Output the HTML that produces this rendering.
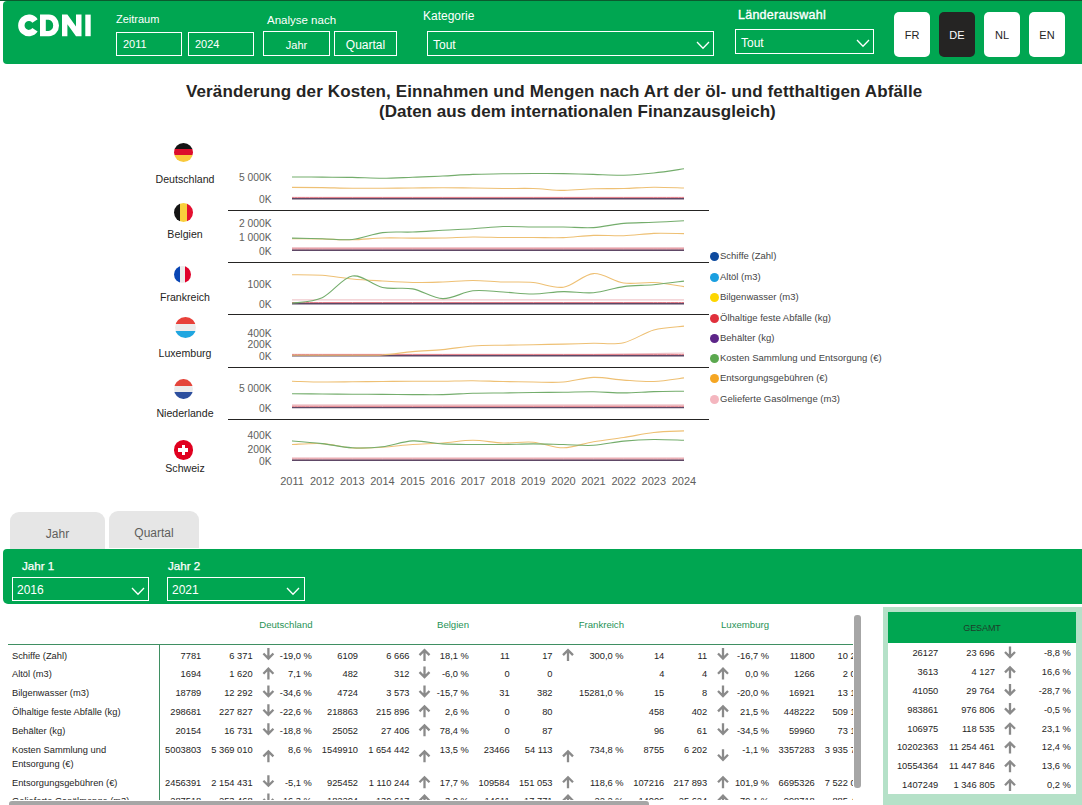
<!DOCTYPE html>
<html><head><meta charset="utf-8"><style>
*{margin:0;padding:0;box-sizing:border-box}
html,body{width:1082px;height:805px;overflow:hidden;background:#fff;font-family:"Liberation Sans",sans-serif;color:#252423}
.abs{position:absolute}
#topline{left:0;top:0;width:1082px;height:1px;background:#0b5a2e}
#hdr{left:3px;top:1px;width:1090px;height:63px;background:#00a651;border-radius:4px}
.lbl{position:absolute;color:#fff;font-size:12px;white-space:nowrap}
.box{position:absolute;border:1px solid #fff;color:#fff;font-size:12px;white-space:nowrap}
.btn{position:absolute;background:#fff;border-radius:5px;font-size:11px;color:#252423;text-align:center}
.chev{position:absolute;width:14px;height:9px}
.title{position:absolute;font-weight:bold;font-size:17px;color:#252423;letter-spacing:0.12px;line-height:20px;white-space:nowrap}
.flag{position:absolute;width:19px;height:19px;border-radius:50%;overflow:hidden}
.cname{position:absolute;font-size:10.6px;color:#252423;text-align:center;width:100px;white-space:nowrap;line-height:13px}
.ax{position:absolute;font-size:10.3px;color:#605e5c;text-align:right;width:60px;white-space:nowrap;line-height:13px}
.yr{position:absolute;font-size:11px;color:#605e5c;text-align:center;width:40px;line-height:13px}
.sep{position:absolute;left:228px;width:481px;height:1px;background:#252423}
.leg{position:absolute;left:709px;font-size:9.5px;color:#444;white-space:nowrap;line-height:11px}
.leg i{position:absolute;left:0.6px;top:1px;width:9px;height:9px;border-radius:50%}
.leg span{position:absolute;left:11px;top:-0.8px}
.tab{position:absolute;background:#e6e6e6;border-radius:9px 9px 0 0;font-size:12px;color:#605e5c;text-align:center}
.t{position:absolute;font-size:9.3px;color:#252423;white-space:nowrap;line-height:12px}
.r{text-align:right}
.ch{position:absolute;font-size:9.6px;color:#1f9356;white-space:nowrap;line-height:12px;text-align:right}
</style></head><body>
<div class="abs" id="topline"></div><div class="abs" id="hdr"></div>
<svg class="abs" style="left:0;top:0" width="100" height="50"><g fill="#fff"><path d="M35.0 21.0 A7.5 7.7 0 1 0 35.0 29.8" stroke="#fff" stroke-width="6.4" fill="none"/><path fill-rule="evenodd" d="M40 14.6 H49 A10 10.8 0 0 1 49 36.2 H40 Z M45.8 19.8 H48.5 A4.7 5.6 0 0 1 48.5 31 H45.8 Z"/><path d="M62 36.2 V14.6 H67.4 L76 26.5 V14.6 H81.5 V36.2 H76 L67.4 24.3 V36.2 Z"/><rect x="85.3" y="14.6" width="5.4" height="21.6"/></g></svg>
<div class="lbl" style="left:116px;top:13px;font-size:11px">Zeitraum</div>
<div class="box" style="left:116px;top:32px;width:66px;height:24px;padding:5px 0 0 6px;font-size:11px">2011</div>
<div class="box" style="left:188px;top:32px;width:66px;height:24px;padding:5px 0 0 6px;font-size:11px">2024</div>
<div class="lbl" style="left:267px;top:14px;font-size:11.5px">Analyse nach</div>
<div class="box" style="left:263px;top:31px;width:67px;height:25px;padding:7px 0 0 0;text-align:center;font-size:11px">Jahr</div>
<div class="box" style="left:334px;top:31px;width:63px;height:25px;padding:6px 0 0 0;text-align:center">Quartal</div>
<div class="lbl" style="left:423px;top:9px">Kategorie</div>
<div class="box" style="left:427px;top:31px;width:287px;height:25px;padding:6px 0 0 5px">Tout</div>
<svg class="chev" style="left:695.5px;top:41px" viewBox="0 0 14 9"><path d="M1 1 L7 7.3 L13 1" stroke="#fff" stroke-width="1.3" fill="none"/></svg>
<div class="lbl" style="left:738px;top:8px;font-size:12.5px;letter-spacing:0.25px;-webkit-text-stroke:0.35px #fff">Länderauswahl</div>
<div class="box" style="left:735px;top:29px;width:139px;height:25px;padding:6px 0 0 5px">Tout</div>
<svg class="chev" style="left:855.5px;top:39px" viewBox="0 0 14 9"><path d="M1 1 L7 7.3 L13 1" stroke="#fff" stroke-width="1.3" fill="none"/></svg>
<div class="btn" style="left:894px;top:12px;width:36px;height:45px;line-height:47px">FR</div>
<div class="btn" style="left:939px;top:12px;width:36px;height:45px;line-height:47px;background:#252423;color:#fff">DE</div>
<div class="btn" style="left:984px;top:12px;width:36px;height:45px;line-height:47px">NL</div>
<div class="btn" style="left:1029px;top:12px;width:36px;height:45px;line-height:47px">EN</div>
<div class="title" style="left:186px;top:81.5px">Veränderung der Kosten, Einnahmen und Mengen nach Art der öl- und fetthaltigen Abfälle</div>
<div class="title" style="left:379px;top:101.5px;letter-spacing:0.02px">(Daten aus dem internationalen Finanzausgleich)</div>

<div class="flag" style="left:174.0px;top:142.8px"><div style="height:33.34%;background:#141414"></div><div style="height:33.34%;background:#dc0e2c"></div><div style="height:33.34%;background:#f9c93c"></div></div>
<div class="flag" style="left:174.0px;top:203.1px;display:flex"><div style="flex:1;background:#141414"></div><div style="flex:1;background:#f9cf3c"></div><div style="flex:1;background:#e4102f"></div></div>
<div class="flag" style="left:173.7px;top:265.8px;width:17.7px;height:17.5px;display:flex"><div style="flex:1;background:#0a46b4"></div><div style="flex:1;background:#ececec"></div><div style="flex:1;background:#e0002a"></div></div>
<div class="flag" style="left:175.4px;top:317px;width:21px;height:21px"><div style="height:34%;background:#e8413a"></div><div style="height:32%;background:#ececec"></div><div style="height:34%;background:#20a6e0"></div></div>
<div class="flag" style="left:174.2px;top:379px;width:18.5px;height:20px"><div style="height:34%;background:#e4453b"></div><div style="height:32%;background:#ececec"></div><div style="height:34%;background:#2d4f9e"></div></div>
<div class="flag" style="left:174.1px;top:440px;width:18.8px;height:19.6px;background:#e0001f"><div style="position:absolute;left:7.5px;top:5px;width:3.7px;height:10px;background:#fff"></div><div style="position:absolute;left:4.3px;top:8.2px;width:10.1px;height:3.8px;background:#fff"></div></div>
<div class="cname" style="left:135px;top:172.5px">Deutschland</div>
<div class="cname" style="left:135px;top:227.5px">Belgien</div>
<div class="cname" style="left:135px;top:290.7px">Frankreich</div>
<div class="cname" style="left:135px;top:346.5px">Luxemburg</div>
<div class="cname" style="left:135px;top:406.6px">Niederlande</div>
<div class="cname" style="left:135px;top:462.4px">Schweiz</div>
<div class="ax" style="left:211.6px;top:171.2px">5 000K</div>
<div class="ax" style="left:211.6px;top:193.3px">0K</div>
<div class="ax" style="left:211.6px;top:217.2px">2 000K</div>
<div class="ax" style="left:211.6px;top:230.5px">1 000K</div>
<div class="ax" style="left:211.6px;top:244.5px">0K</div>
<div class="ax" style="left:211.6px;top:278.4px">100K</div>
<div class="ax" style="left:211.6px;top:297.5px">0K</div>
<div class="ax" style="left:211.6px;top:327.1px">400K</div>
<div class="ax" style="left:211.6px;top:338.2px">200K</div>
<div class="ax" style="left:211.6px;top:349.8px">0K</div>
<div class="ax" style="left:211.6px;top:382.0px">5 000K</div>
<div class="ax" style="left:211.6px;top:401.9px">0K</div>
<div class="ax" style="left:211.6px;top:428.8px">400K</div>
<div class="ax" style="left:211.6px;top:442.5px">200K</div>
<div class="ax" style="left:211.6px;top:454.6px">0K</div>
<div class="sep" style="top:210px"></div>
<div class="sep" style="top:262px"></div>
<div class="sep" style="top:314px"></div>
<div class="sep" style="top:367px"></div>
<div class="sep" style="top:419px"></div>
<div class="yr" style="left:272.0px;top:474.5px">2011</div>
<div class="yr" style="left:302.2px;top:474.5px">2012</div>
<div class="yr" style="left:332.3px;top:474.5px">2013</div>
<div class="yr" style="left:362.5px;top:474.5px">2014</div>
<div class="yr" style="left:392.6px;top:474.5px">2015</div>
<div class="yr" style="left:422.8px;top:474.5px">2016</div>
<div class="yr" style="left:452.9px;top:474.5px">2017</div>
<div class="yr" style="left:483.1px;top:474.5px">2018</div>
<div class="yr" style="left:513.2px;top:474.5px">2019</div>
<div class="yr" style="left:543.4px;top:474.5px">2020</div>
<div class="yr" style="left:573.5px;top:474.5px">2021</div>
<div class="yr" style="left:603.7px;top:474.5px">2022</div>
<div class="yr" style="left:633.8px;top:474.5px">2023</div>
<div class="yr" style="left:664.0px;top:474.5px">2024</div>
<svg class="abs" style="left:0;top:0" width="1082" height="805"><path d="M292.0 198.2 C297.0 198.2 312.1 198.2 322.2 198.2 C332.2 198.2 342.3 198.2 352.3 198.2 C362.4 198.2 372.4 198.2 382.5 198.2 C392.5 198.2 402.6 198.2 412.6 198.2 C422.7 198.2 432.7 198.2 442.8 198.2 C452.8 198.2 462.9 198.2 472.9 198.2 C483.0 198.2 493.0 198.2 503.1 198.2 C513.1 198.2 523.2 198.2 533.2 198.2 C543.3 198.2 553.3 198.2 563.4 198.2 C573.4 198.2 583.5 198.2 593.5 198.2 C603.6 198.2 613.6 198.2 623.7 198.2 C633.7 198.2 643.8 198.2 653.8 198.2 C663.9 198.2 679.0 198.2 684.0 198.2" stroke="#f0c8cd" stroke-width="1.2" fill="none"/>
<path d="M292.0 197.4 C297.0 197.4 312.1 197.4 322.2 197.4 C332.2 197.4 342.3 197.4 352.3 197.4 C362.4 197.4 372.4 197.4 382.5 197.4 C392.5 197.4 402.6 197.4 412.6 197.4 C422.7 197.4 432.7 197.4 442.8 197.4 C452.8 197.4 462.9 197.4 472.9 197.4 C483.0 197.4 493.0 197.4 503.1 197.4 C513.1 197.4 523.2 197.4 533.2 197.4 C543.3 197.4 553.3 197.4 563.4 197.4 C573.4 197.4 583.5 197.4 593.5 197.4 C603.6 197.4 613.6 197.4 623.7 197.4 C633.7 197.4 643.8 197.4 653.8 197.4 C663.9 197.4 679.0 197.4 684.0 197.4" stroke="#e07a84" stroke-width="1.0" fill="none"/>
<path d="M292.0 198.7 C297.0 198.7 312.1 198.7 322.2 198.7 C332.2 198.7 342.3 198.7 352.3 198.7 C362.4 198.7 372.4 198.7 382.5 198.7 C392.5 198.7 402.6 198.7 412.6 198.7 C422.7 198.7 432.7 198.7 442.8 198.7 C452.8 198.7 462.9 198.7 472.9 198.7 C483.0 198.7 493.0 198.7 503.1 198.7 C513.1 198.7 523.2 198.7 533.2 198.7 C543.3 198.7 553.3 198.7 563.4 198.7 C573.4 198.7 583.5 198.7 593.5 198.7 C603.6 198.7 613.6 198.7 623.7 198.7 C633.7 198.7 643.8 198.7 653.8 198.7 C663.9 198.7 679.0 198.7 684.0 198.7" stroke="#5e4866" stroke-width="1.4" fill="none"/>
<path d="M292.0 187.4 C297.0 187.4 312.1 187.4 322.2 187.6 C332.2 187.8 342.3 188.2 352.3 188.3 C362.4 188.4 372.4 188.2 382.5 188.2 C392.5 188.1 402.6 188.1 412.6 188.0 C422.7 187.9 432.7 187.7 442.8 187.7 C452.8 187.7 462.9 187.9 472.9 188.0 C483.0 188.1 493.0 188.4 503.1 188.5 C513.1 188.6 523.2 188.2 533.2 188.5 C543.3 188.8 553.3 190.3 563.4 190.4 C573.4 190.5 583.5 189.1 593.5 188.8 C603.6 188.5 613.6 188.8 623.7 188.5 C633.7 188.2 643.8 187.3 653.8 187.2 C663.9 187.1 679.0 187.9 684.0 188.0" stroke="#eec074" stroke-width="1.1" fill="none"/>
<path d="M292.0 177.0 C297.0 177.0 312.1 177.0 322.2 177.1 C332.2 177.2 342.3 177.2 352.3 177.4 C362.4 177.6 372.4 178.3 382.5 178.3 C392.5 178.3 402.6 177.6 412.6 177.2 C422.7 176.8 432.7 176.5 442.8 176.0 C452.8 175.5 462.9 174.8 472.9 174.4 C483.0 174.0 493.0 174.0 503.1 173.8 C513.1 173.7 523.2 173.5 533.2 173.5 C543.3 173.5 553.3 173.4 563.4 173.6 C573.4 173.8 583.5 174.1 593.5 174.4 C603.6 174.7 613.6 175.4 623.7 175.2 C633.7 175.0 643.8 174.1 653.8 173.0 C663.9 171.9 679.0 169.5 684.0 168.8" stroke="#74ad6c" stroke-width="1.1" fill="none"/>
<path d="M292.0 248.2 C297.0 248.2 312.1 248.2 322.2 248.2 C332.2 248.2 342.3 248.2 352.3 248.2 C362.4 248.2 372.4 248.2 382.5 248.2 C392.5 248.2 402.6 248.2 412.6 248.2 C422.7 248.2 432.7 248.2 442.8 248.2 C452.8 248.2 462.9 248.2 472.9 248.2 C483.0 248.2 493.0 248.2 503.1 248.2 C513.1 248.2 523.2 248.2 533.2 248.2 C543.3 248.2 553.3 248.2 563.4 248.2 C573.4 248.2 583.5 248.2 593.5 248.2 C603.6 248.2 613.6 248.2 623.7 248.2 C633.7 248.2 643.8 248.2 653.8 248.2 C663.9 248.2 679.0 248.2 684.0 248.2" stroke="#f0c8cd" stroke-width="2.2" fill="none"/>
<path d="M292.0 249.0 C297.0 249.0 312.1 249.0 322.2 249.0 C332.2 249.0 342.3 249.0 352.3 249.0 C362.4 249.0 372.4 249.0 382.5 249.0 C392.5 249.0 402.6 249.0 412.6 249.0 C422.7 249.0 432.7 249.0 442.8 249.0 C452.8 249.0 462.9 249.0 472.9 249.0 C483.0 249.0 493.0 249.0 503.1 249.0 C513.1 249.0 523.2 249.0 533.2 249.0 C543.3 249.0 553.3 249.0 563.4 249.0 C573.4 249.0 583.5 249.0 593.5 249.0 C603.6 249.0 613.6 249.0 623.7 249.0 C633.7 249.0 643.8 249.0 653.8 249.0 C663.9 249.0 679.0 249.0 684.0 249.0" stroke="#e07a84" stroke-width="1.0" fill="none"/>
<path d="M292.0 250.3 C297.0 250.3 312.1 250.3 322.2 250.3 C332.2 250.3 342.3 250.3 352.3 250.3 C362.4 250.3 372.4 250.3 382.5 250.3 C392.5 250.3 402.6 250.3 412.6 250.3 C422.7 250.3 432.7 250.3 442.8 250.3 C452.8 250.3 462.9 250.3 472.9 250.3 C483.0 250.3 493.0 250.3 503.1 250.3 C513.1 250.3 523.2 250.3 533.2 250.3 C543.3 250.3 553.3 250.3 563.4 250.3 C573.4 250.3 583.5 250.3 593.5 250.3 C603.6 250.3 613.6 250.3 623.7 250.3 C633.7 250.3 643.8 250.3 653.8 250.3 C663.9 250.3 679.0 250.3 684.0 250.3" stroke="#5e4866" stroke-width="1.4" fill="none"/>
<path d="M292.0 238.7 C297.0 238.8 312.1 238.8 322.2 239.0 C332.2 239.2 342.3 240.0 352.3 239.8 C362.4 239.6 372.4 238.3 382.5 238.0 C392.5 237.7 402.6 238.1 412.6 238.1 C422.7 238.1 432.7 238.2 442.8 238.0 C452.8 237.8 462.9 237.1 472.9 237.0 C483.0 236.9 493.0 237.4 503.1 237.5 C513.1 237.6 523.2 237.5 533.2 237.5 C543.3 237.5 553.3 237.9 563.4 237.6 C573.4 237.2 583.5 235.7 593.5 235.4 C603.6 235.1 613.6 236.0 623.7 235.7 C633.7 235.4 643.8 233.8 653.8 233.4 C663.9 233.1 679.0 233.6 684.0 233.6" stroke="#eec074" stroke-width="1.1" fill="none"/>
<path d="M292.0 238.1 C297.0 238.2 312.1 238.5 322.2 238.7 C332.2 238.9 342.3 240.5 352.3 239.5 C362.4 238.5 372.4 233.8 382.5 232.6 C392.5 231.3 402.6 232.4 412.6 232.0 C422.7 231.6 432.7 230.8 442.8 230.2 C452.8 229.6 462.9 229.3 472.9 228.7 C483.0 228.1 493.0 226.8 503.1 226.5 C513.1 226.2 523.2 226.9 533.2 227.0 C543.3 227.1 553.3 226.9 563.4 227.0 C573.4 227.1 583.5 228.2 593.5 227.6 C603.6 227.0 613.6 224.3 623.7 223.4 C633.7 222.5 643.8 222.8 653.8 222.3 C663.9 221.9 679.0 221.0 684.0 220.7" stroke="#74ad6c" stroke-width="1.1" fill="none"/>
<path d="M292.0 299.9 C297.0 299.9 312.1 299.9 322.2 299.9 C332.2 299.9 342.3 299.9 352.3 299.9 C362.4 299.9 372.4 299.9 382.5 299.9 C392.5 299.9 402.6 299.9 412.6 299.9 C422.7 299.9 432.7 299.9 442.8 299.9 C452.8 299.9 462.9 299.9 472.9 299.9 C483.0 299.9 493.0 299.9 503.1 299.9 C513.1 299.9 523.2 299.9 533.2 299.9 C543.3 299.9 553.3 299.9 563.4 299.9 C573.4 299.9 583.5 299.9 593.5 299.9 C603.6 299.9 613.6 299.9 623.7 299.9 C633.7 299.9 643.8 299.9 653.8 299.9 C663.9 299.9 679.0 299.9 684.0 299.9" stroke="#f0c8cd" stroke-width="1.2" fill="none"/>
<path d="M292.0 302.5 C297.0 302.5 312.1 302.5 322.2 302.5 C332.2 302.5 342.3 302.5 352.3 302.5 C362.4 302.5 372.4 302.5 382.5 302.5 C392.5 302.5 402.6 302.5 412.6 302.5 C422.7 302.5 432.7 302.5 442.8 302.5 C452.8 302.5 462.9 302.5 472.9 302.5 C483.0 302.5 493.0 302.5 503.1 302.5 C513.1 302.5 523.2 302.5 533.2 302.5 C543.3 302.5 553.3 302.5 563.4 302.5 C573.4 302.5 583.5 302.5 593.5 302.5 C603.6 302.5 613.6 302.5 623.7 302.5 C633.7 302.5 643.8 302.5 653.8 302.5 C663.9 302.5 679.0 302.5 684.0 302.5" stroke="#e07a84" stroke-width="1.0" fill="none"/>
<path d="M292.0 303.8 C297.0 303.8 312.1 303.8 322.2 303.8 C332.2 303.8 342.3 303.8 352.3 303.8 C362.4 303.8 372.4 303.8 382.5 303.8 C392.5 303.8 402.6 303.8 412.6 303.8 C422.7 303.8 432.7 303.8 442.8 303.8 C452.8 303.8 462.9 303.8 472.9 303.8 C483.0 303.8 493.0 303.8 503.1 303.8 C513.1 303.8 523.2 303.8 533.2 303.8 C543.3 303.8 553.3 303.8 563.4 303.8 C573.4 303.8 583.5 303.8 593.5 303.8 C603.6 303.8 613.6 303.8 623.7 303.8 C633.7 303.8 643.8 303.8 653.8 303.8 C663.9 303.8 679.0 303.8 684.0 303.8" stroke="#5e4866" stroke-width="1.4" fill="none"/>
<path d="M292.0 274.7 C297.0 274.8 312.1 274.6 322.2 275.3 C332.2 276.0 342.3 278.1 352.3 279.0 C362.4 279.9 372.4 280.4 382.5 281.0 C392.5 281.6 402.6 282.3 412.6 282.5 C422.7 282.7 432.7 282.3 442.8 282.0 C452.8 281.7 462.9 280.5 472.9 280.5 C483.0 280.5 493.0 281.7 503.1 282.0 C513.1 282.3 523.2 281.6 533.2 282.5 C543.3 283.4 553.3 288.7 563.4 287.2 C573.4 285.7 583.5 274.3 593.5 273.6 C603.6 272.9 613.6 281.5 623.7 283.0 C633.7 284.5 643.8 281.9 653.8 282.5 C663.9 283.1 679.0 285.9 684.0 286.6" stroke="#eec074" stroke-width="1.1" fill="none"/>
<path d="M292.0 303.3 C297.0 302.4 312.1 302.2 322.2 297.7 C332.2 293.1 342.3 277.7 352.3 276.0 C362.4 274.3 372.4 285.4 382.5 287.5 C392.5 289.6 402.6 287.0 412.6 288.9 C422.7 290.8 432.7 298.3 442.8 298.6 C452.8 298.9 462.9 291.9 472.9 290.8 C483.0 289.7 493.0 291.5 503.1 292.0 C513.1 292.5 523.2 294.1 533.2 294.0 C543.3 293.9 553.3 291.8 563.4 291.6 C573.4 291.4 583.5 293.5 593.5 292.7 C603.6 291.9 613.6 287.9 623.7 286.6 C633.7 285.3 643.8 285.6 653.8 284.7 C663.9 283.8 679.0 281.7 684.0 281.1" stroke="#74ad6c" stroke-width="1.1" fill="none"/>
<path d="M292.0 355.0 C297.0 355.0 312.1 355.0 322.2 355.0 C332.2 355.0 342.3 355.0 352.3 355.0 C362.4 355.0 372.4 355.0 382.5 355.0 C392.5 355.0 402.6 355.0 412.6 355.0 C422.7 355.0 432.7 355.0 442.8 355.0 C452.8 355.0 462.9 355.0 472.9 355.0 C483.0 355.0 493.0 355.0 503.1 355.0 C513.1 355.0 523.2 355.0 533.2 355.0 C543.3 355.0 553.3 355.1 563.4 355.0 C573.4 354.9 583.5 354.7 593.5 354.5 C603.6 354.3 613.6 354.2 623.7 354.0 C633.7 353.8 643.8 353.7 653.8 353.5 C663.9 353.3 679.0 353.1 684.0 353.0" stroke="#f0c8cd" stroke-width="1.2" fill="none"/>
<path d="M292.0 354.4 C297.0 354.4 312.1 354.4 322.2 354.4 C332.2 354.4 342.3 354.4 352.3 354.4 C362.4 354.4 372.4 354.4 382.5 354.4 C392.5 354.4 402.6 354.4 412.6 354.4 C422.7 354.4 432.7 354.4 442.8 354.4 C452.8 354.4 462.9 354.4 472.9 354.4 C483.0 354.4 493.0 354.4 503.1 354.4 C513.1 354.4 523.2 354.4 533.2 354.4 C543.3 354.4 553.3 354.4 563.4 354.4 C573.4 354.4 583.5 354.4 593.5 354.4 C603.6 354.4 613.6 354.4 623.7 354.4 C633.7 354.4 643.8 354.4 653.8 354.4 C663.9 354.4 679.0 354.4 684.0 354.4" stroke="#e07a84" stroke-width="1.0" fill="none"/>
<path d="M292.0 355.7 C297.0 355.7 312.1 355.7 322.2 355.7 C332.2 355.7 342.3 355.7 352.3 355.7 C362.4 355.7 372.4 355.7 382.5 355.7 C392.5 355.7 402.6 355.7 412.6 355.7 C422.7 355.7 432.7 355.7 442.8 355.7 C452.8 355.7 462.9 355.7 472.9 355.7 C483.0 355.7 493.0 355.7 503.1 355.7 C513.1 355.7 523.2 355.7 533.2 355.7 C543.3 355.7 553.3 355.7 563.4 355.7 C573.4 355.7 583.5 355.7 593.5 355.7 C603.6 355.7 613.6 355.7 623.7 355.7 C633.7 355.7 643.8 355.7 653.8 355.7 C663.9 355.7 679.0 355.7 684.0 355.7" stroke="#5e4866" stroke-width="1.4" fill="none"/>
<path d="M292.0 355.2 C297.0 355.2 312.1 355.2 322.2 355.2 C332.2 355.2 342.3 355.2 352.3 355.2 C362.4 355.2 372.4 355.6 382.5 355.0 C392.5 354.4 402.6 352.5 412.6 351.6 C422.7 350.7 432.7 350.5 442.8 349.6 C452.8 348.7 462.9 346.7 472.9 346.0 C483.0 345.3 493.0 345.4 503.1 345.2 C513.1 345.0 523.2 344.9 533.2 344.7 C543.3 344.5 553.3 344.3 563.4 344.1 C573.4 343.9 583.5 343.5 593.5 343.3 C603.6 343.1 613.6 344.9 623.7 342.7 C633.7 340.5 643.8 332.8 653.8 330.0 C663.9 327.2 679.0 326.8 684.0 326.1" stroke="#eec074" stroke-width="1.1" fill="none"/>
<path d="M292.0 405.4 C297.0 405.4 312.1 405.4 322.2 405.4 C332.2 405.4 342.3 405.4 352.3 405.4 C362.4 405.4 372.4 405.4 382.5 405.4 C392.5 405.4 402.6 405.4 412.6 405.4 C422.7 405.4 432.7 405.4 442.8 405.4 C452.8 405.4 462.9 405.4 472.9 405.4 C483.0 405.4 493.0 405.4 503.1 405.4 C513.1 405.4 523.2 405.4 533.2 405.4 C543.3 405.4 553.3 405.4 563.4 405.4 C573.4 405.4 583.5 405.4 593.5 405.4 C603.6 405.4 613.6 405.4 623.7 405.4 C633.7 405.4 643.8 405.4 653.8 405.4 C663.9 405.4 679.0 405.4 684.0 405.4" stroke="#f0c8cd" stroke-width="2.4" fill="none"/>
<path d="M292.0 406.3 C297.0 406.3 312.1 406.3 322.2 406.3 C332.2 406.3 342.3 406.3 352.3 406.3 C362.4 406.3 372.4 406.3 382.5 406.3 C392.5 406.3 402.6 406.3 412.6 406.3 C422.7 406.3 432.7 406.3 442.8 406.3 C452.8 406.3 462.9 406.3 472.9 406.3 C483.0 406.3 493.0 406.3 503.1 406.3 C513.1 406.3 523.2 406.3 533.2 406.3 C543.3 406.3 553.3 406.3 563.4 406.3 C573.4 406.3 583.5 406.3 593.5 406.3 C603.6 406.3 613.6 406.3 623.7 406.3 C633.7 406.3 643.8 406.3 653.8 406.3 C663.9 406.3 679.0 406.3 684.0 406.3" stroke="#e07a84" stroke-width="1.0" fill="none"/>
<path d="M292.0 407.6 C297.0 407.6 312.1 407.6 322.2 407.6 C332.2 407.6 342.3 407.6 352.3 407.6 C362.4 407.6 372.4 407.6 382.5 407.6 C392.5 407.6 402.6 407.6 412.6 407.6 C422.7 407.6 432.7 407.6 442.8 407.6 C452.8 407.6 462.9 407.6 472.9 407.6 C483.0 407.6 493.0 407.6 503.1 407.6 C513.1 407.6 523.2 407.6 533.2 407.6 C543.3 407.6 553.3 407.6 563.4 407.6 C573.4 407.6 583.5 407.6 593.5 407.6 C603.6 407.6 613.6 407.6 623.7 407.6 C633.7 407.6 643.8 407.6 653.8 407.6 C663.9 407.6 679.0 407.6 684.0 407.6" stroke="#5e4866" stroke-width="1.4" fill="none"/>
<path d="M292.0 381.2 C297.0 381.3 312.1 381.9 322.2 382.0 C332.2 382.1 342.3 381.9 352.3 381.8 C362.4 381.7 372.4 381.6 382.5 381.5 C392.5 381.4 402.6 381.2 412.6 381.2 C422.7 381.1 432.7 381.3 442.8 381.2 C452.8 381.1 462.9 380.6 472.9 380.7 C483.0 380.8 493.0 381.3 503.1 381.5 C513.1 381.7 523.2 381.9 533.2 382.0 C543.3 382.1 553.3 382.8 563.4 382.0 C573.4 381.2 583.5 377.7 593.5 377.4 C603.6 377.1 613.6 379.4 623.7 380.1 C633.7 380.8 643.8 381.9 653.8 381.5 C663.9 381.1 679.0 378.5 684.0 377.9" stroke="#eec074" stroke-width="1.1" fill="none"/>
<path d="M292.0 393.7 C297.0 393.8 312.1 393.9 322.2 394.0 C332.2 394.1 342.3 394.1 352.3 394.2 C362.4 394.3 372.4 394.3 382.5 394.4 C392.5 394.5 402.6 394.6 412.6 394.6 C422.7 394.6 432.7 394.8 442.8 394.6 C452.8 394.4 462.9 393.6 472.9 393.3 C483.0 393.0 493.0 393.1 503.1 393.0 C513.1 392.9 523.2 392.6 533.2 392.5 C543.3 392.4 553.3 392.3 563.4 392.2 C573.4 392.1 583.5 391.7 593.5 391.8 C603.6 391.9 613.6 392.9 623.7 392.9 C633.7 392.9 643.8 391.9 653.8 391.6 C663.9 391.3 679.0 391.3 684.0 391.2" stroke="#74ad6c" stroke-width="1.1" fill="none"/>
<path d="M292.0 457.8 C297.0 457.8 312.1 457.8 322.2 457.8 C332.2 457.8 342.3 457.8 352.3 457.8 C362.4 457.8 372.4 457.8 382.5 457.8 C392.5 457.8 402.6 457.8 412.6 457.8 C422.7 457.8 432.7 457.8 442.8 457.8 C452.8 457.8 462.9 457.8 472.9 457.8 C483.0 457.8 493.0 457.8 503.1 457.8 C513.1 457.8 523.2 457.8 533.2 457.8 C543.3 457.8 553.3 457.8 563.4 457.8 C573.4 457.8 583.5 457.8 593.5 457.8 C603.6 457.8 613.6 457.8 623.7 457.8 C633.7 457.8 643.8 457.8 653.8 457.8 C663.9 457.8 679.0 457.8 684.0 457.8" stroke="#f0c8cd" stroke-width="1.2" fill="none"/>
<path d="M292.0 459.0 C297.0 459.0 312.1 459.0 322.2 459.0 C332.2 459.0 342.3 459.0 352.3 459.0 C362.4 459.0 372.4 459.0 382.5 459.0 C392.5 459.0 402.6 459.0 412.6 459.0 C422.7 459.0 432.7 459.0 442.8 459.0 C452.8 459.0 462.9 459.0 472.9 459.0 C483.0 459.0 493.0 459.0 503.1 459.0 C513.1 459.0 523.2 459.0 533.2 459.0 C543.3 459.0 553.3 459.0 563.4 459.0 C573.4 459.0 583.5 459.0 593.5 459.0 C603.6 459.0 613.6 459.0 623.7 459.0 C633.7 459.0 643.8 459.0 653.8 459.0 C663.9 459.0 679.0 459.0 684.0 459.0" stroke="#e07a84" stroke-width="1.0" fill="none"/>
<path d="M292.0 460.3 C297.0 460.3 312.1 460.3 322.2 460.3 C332.2 460.3 342.3 460.3 352.3 460.3 C362.4 460.3 372.4 460.3 382.5 460.3 C392.5 460.3 402.6 460.3 412.6 460.3 C422.7 460.3 432.7 460.3 442.8 460.3 C452.8 460.3 462.9 460.3 472.9 460.3 C483.0 460.3 493.0 460.3 503.1 460.3 C513.1 460.3 523.2 460.3 533.2 460.3 C543.3 460.3 553.3 460.3 563.4 460.3 C573.4 460.3 583.5 460.3 593.5 460.3 C603.6 460.3 613.6 460.3 623.7 460.3 C633.7 460.3 643.8 460.3 653.8 460.3 C663.9 460.3 679.0 460.3 684.0 460.3" stroke="#5e4866" stroke-width="1.4" fill="none"/>
<path d="M292.0 444.5 C297.0 444.4 312.1 443.0 322.2 443.6 C332.2 444.2 342.3 447.4 352.3 448.0 C362.4 448.6 372.4 447.8 382.5 447.2 C392.5 446.6 402.6 445.2 412.6 444.5 C422.7 443.8 432.7 443.7 442.8 443.0 C452.8 442.3 462.9 440.3 472.9 440.3 C483.0 440.3 493.0 442.7 503.1 443.0 C513.1 443.3 523.2 441.4 533.2 442.2 C543.3 443.0 553.3 447.9 563.4 447.8 C573.4 447.7 583.5 443.4 593.5 441.7 C603.6 440.0 613.6 439.0 623.7 437.5 C633.7 436.0 643.8 433.6 653.8 432.5 C663.9 431.4 679.0 431.2 684.0 430.9" stroke="#eec074" stroke-width="1.1" fill="none"/>
<path d="M292.0 440.9 C297.0 441.3 312.1 442.5 322.2 443.6 C332.2 444.8 342.3 447.3 352.3 447.8 C362.4 448.3 372.4 447.9 382.5 446.7 C392.5 445.5 402.6 441.4 412.6 440.9 C422.7 440.4 432.7 443.3 442.8 443.9 C452.8 444.5 462.9 444.4 472.9 444.5 C483.0 444.6 493.0 444.6 503.1 444.5 C513.1 444.4 523.2 443.9 533.2 443.9 C543.3 443.9 553.3 444.3 563.4 444.5 C573.4 444.7 583.5 445.9 593.5 445.3 C603.6 444.7 613.6 442.1 623.7 441.1 C633.7 440.1 643.8 439.6 653.8 439.5 C663.9 439.4 679.0 440.2 684.0 440.3" stroke="#74ad6c" stroke-width="1.1" fill="none"/></svg>
<div class="leg" style="top:250.9px"><i style="background:#0d4a9e"></i><span>Schiffe (Zahl)</span></div>
<div class="leg" style="top:271.8px"><i style="background:#1a9fe0"></i><span>Altöl (m3)</span></div>
<div class="leg" style="top:292.1px"><i style="background:#fdd600"></i><span>Bilgenwasser (m3)</span></div>
<div class="leg" style="top:312.8px"><i style="background:#e0303c"></i><span>Ölhaltige feste Abfälle (kg)</span></div>
<div class="leg" style="top:332.5px"><i style="background:#5d2588"></i><span>Behälter (kg)</span></div>
<div class="leg" style="top:352.7px"><i style="background:#5ba84f"></i><span>Kosten Sammlung und Entsorgung (€)</span></div>
<div class="leg" style="top:373.1px"><i style="background:#f5a623"></i><span>Entsorgungsgebühren (€)</span></div>
<div class="leg" style="top:393.8px"><i style="background:#f4b6bf"></i><span>Gelieferte Gasölmenge (m3)</span></div>
<div class="tab" style="left:10px;top:512px;width:95px;height:37px;padding-top:15px">Jahr</div>
<div class="tab" style="left:109px;top:511px;width:90px;height:37px;padding-top:15px">Quartal</div>
<div class="abs" style="left:3px;top:549px;width:1090px;height:55px;background:#00a651;border-radius:4px 0 0 5px"></div>
<div class="lbl" style="left:22px;top:559px;font-size:11.6px;-webkit-text-stroke:0.25px #fff">Jahr 1</div>
<div class="box" style="left:12px;top:577px;width:137px;height:24px;padding:5px 0 0 4px">2016</div>
<svg class="chev" style="left:130.5px;top:586.5px" viewBox="0 0 14 9"><path d="M1 1 L7 7.3 L13 1" stroke="#fff" stroke-width="1.3" fill="none"/></svg>
<div class="lbl" style="left:168px;top:559px;font-size:11.6px;-webkit-text-stroke:0.25px #fff">Jahr 2</div>
<div class="box" style="left:167px;top:577px;width:138px;height:24px;padding:5px 0 0 4px">2021</div>
<svg class="chev" style="left:286px;top:586.5px" viewBox="0 0 14 9"><path d="M1 1 L7 7.3 L13 1" stroke="#fff" stroke-width="1.3" fill="none"/></svg>
<div class="abs" style="left:0;top:0;width:853px;height:800px;overflow:hidden"><div class="abs" style="left:8px;top:644px;width:845px;height:1px;background:#3f8f62"></div><div class="abs" style="left:159px;top:644px;width:1px;height:161px;background:#3f8f62"></div><div class="t" style="left:12px;top:650.0px">Schiffe (Zahl)</div><div class="t" style="left:12px;top:668.0px">Altöl (m3)</div><div class="t" style="left:12px;top:687.0px">Bilgenwasser (m3)</div><div class="t" style="left:12px;top:706.0px">Ölhaltige feste Abfälle (kg)</div><div class="t" style="left:12px;top:725.0px">Behälter (kg)</div><div class="t" style="left:12px;top:743.6px">Kosten Sammlung und</div><div class="t" style="left:12px;top:776.6px">Entsorgungsgebühren (€)</div><div class="t" style="left:12px;top:795.0px">Gelieferte Gasölmenge (m3)</div><div class="t" style="left:12px;top:758.0px">Entsorgung (€)</div><div class="t r" style="left:121.3px;top:650.0px;width:80px">7781</div><div class="t r" style="left:172.6px;top:650.0px;width:80px">6 371</div><div class="t r" style="left:231.9px;top:650.0px;width:80px">-19,0 %</div><div class="t r" style="left:121.3px;top:668.0px;width:80px">1694</div><div class="t r" style="left:172.6px;top:668.0px;width:80px">1 620</div><div class="t r" style="left:231.9px;top:668.0px;width:80px">7,1 %</div><div class="t r" style="left:121.3px;top:687.0px;width:80px">18789</div><div class="t r" style="left:172.6px;top:687.0px;width:80px">12 292</div><div class="t r" style="left:231.9px;top:687.0px;width:80px">-34,6 %</div><div class="t r" style="left:121.3px;top:706.0px;width:80px">298681</div><div class="t r" style="left:172.6px;top:706.0px;width:80px">227 827</div><div class="t r" style="left:231.9px;top:706.0px;width:80px">-22,6 %</div><div class="t r" style="left:121.3px;top:725.0px;width:80px">20154</div><div class="t r" style="left:172.6px;top:725.0px;width:80px">16 731</div><div class="t r" style="left:231.9px;top:725.0px;width:80px">-18,8 %</div><div class="t r" style="left:121.3px;top:743.6px;width:80px">5003803</div><div class="t r" style="left:172.6px;top:743.6px;width:80px">5 369 010</div><div class="t r" style="left:231.9px;top:743.6px;width:80px">8,6 %</div><div class="t r" style="left:121.3px;top:776.6px;width:80px">2456391</div><div class="t r" style="left:172.6px;top:776.6px;width:80px">2 154 431</div><div class="t r" style="left:231.9px;top:776.6px;width:80px">-5,1 %</div><div class="t r" style="left:121.3px;top:795.0px;width:80px">287518</div><div class="t r" style="left:172.6px;top:795.0px;width:80px">253 468</div><div class="t r" style="left:231.9px;top:795.0px;width:80px">-16,3 %</div><div class="t r" style="left:278.0px;top:650.0px;width:80px">6109</div><div class="t r" style="left:329.5px;top:650.0px;width:80px">6 666</div><div class="t r" style="left:388.8px;top:650.0px;width:80px">18,1 %</div><div class="t r" style="left:278.0px;top:668.0px;width:80px">482</div><div class="t r" style="left:329.5px;top:668.0px;width:80px">312</div><div class="t r" style="left:388.8px;top:668.0px;width:80px">-6,0 %</div><div class="t r" style="left:278.0px;top:687.0px;width:80px">4724</div><div class="t r" style="left:329.5px;top:687.0px;width:80px">3 573</div><div class="t r" style="left:388.8px;top:687.0px;width:80px">-15,7 %</div><div class="t r" style="left:278.0px;top:706.0px;width:80px">218863</div><div class="t r" style="left:329.5px;top:706.0px;width:80px">215 896</div><div class="t r" style="left:388.8px;top:706.0px;width:80px">2,6 %</div><div class="t r" style="left:278.0px;top:725.0px;width:80px">25052</div><div class="t r" style="left:329.5px;top:725.0px;width:80px">27 406</div><div class="t r" style="left:388.8px;top:725.0px;width:80px">78,4 %</div><div class="t r" style="left:278.0px;top:743.6px;width:80px">1549910</div><div class="t r" style="left:329.5px;top:743.6px;width:80px">1 654 442</div><div class="t r" style="left:388.8px;top:743.6px;width:80px">13,5 %</div><div class="t r" style="left:278.0px;top:776.6px;width:80px">925452</div><div class="t r" style="left:329.5px;top:776.6px;width:80px">1 110 244</div><div class="t r" style="left:388.8px;top:776.6px;width:80px">17,7 %</div><div class="t r" style="left:278.0px;top:795.0px;width:80px">182204</div><div class="t r" style="left:329.5px;top:795.0px;width:80px">130 617</div><div class="t r" style="left:388.8px;top:795.0px;width:80px">3,0 %</div><div class="t r" style="left:429.6px;top:650.0px;width:80px">11</div><div class="t r" style="left:472.5px;top:650.0px;width:80px">17</div><div class="t r" style="left:543.5px;top:650.0px;width:80px">300,0 %</div><div class="t r" style="left:429.6px;top:668.0px;width:80px">0</div><div class="t r" style="left:472.5px;top:668.0px;width:80px">0</div><div class="t r" style="left:429.6px;top:687.0px;width:80px">31</div><div class="t r" style="left:472.5px;top:687.0px;width:80px">382</div><div class="t r" style="left:543.5px;top:687.0px;width:80px">15281,0 %</div><div class="t r" style="left:429.6px;top:706.0px;width:80px">0</div><div class="t r" style="left:472.5px;top:706.0px;width:80px">80</div><div class="t r" style="left:429.6px;top:725.0px;width:80px">0</div><div class="t r" style="left:472.5px;top:725.0px;width:80px">87</div><div class="t r" style="left:429.6px;top:743.6px;width:80px">23466</div><div class="t r" style="left:472.5px;top:743.6px;width:80px">54 113</div><div class="t r" style="left:543.5px;top:743.6px;width:80px">734,8 %</div><div class="t r" style="left:429.6px;top:776.6px;width:80px">109584</div><div class="t r" style="left:472.5px;top:776.6px;width:80px">151 053</div><div class="t r" style="left:543.5px;top:776.6px;width:80px">118,6 %</div><div class="t r" style="left:429.6px;top:795.0px;width:80px">14611</div><div class="t r" style="left:472.5px;top:795.0px;width:80px">17 771</div><div class="t r" style="left:543.5px;top:795.0px;width:80px">22,2 %</div><div class="t r" style="left:584.3px;top:650.0px;width:80px">14</div><div class="t r" style="left:627.2px;top:650.0px;width:80px">11</div><div class="t r" style="left:689.0px;top:650.0px;width:80px">-16,7 %</div><div class="t r" style="left:584.3px;top:668.0px;width:80px">4</div><div class="t r" style="left:627.2px;top:668.0px;width:80px">4</div><div class="t r" style="left:689.0px;top:668.0px;width:80px">0,0 %</div><div class="t r" style="left:584.3px;top:687.0px;width:80px">15</div><div class="t r" style="left:627.2px;top:687.0px;width:80px">8</div><div class="t r" style="left:689.0px;top:687.0px;width:80px">-20,0 %</div><div class="t r" style="left:584.3px;top:706.0px;width:80px">458</div><div class="t r" style="left:627.2px;top:706.0px;width:80px">402</div><div class="t r" style="left:689.0px;top:706.0px;width:80px">21,5 %</div><div class="t r" style="left:584.3px;top:725.0px;width:80px">96</div><div class="t r" style="left:627.2px;top:725.0px;width:80px">61</div><div class="t r" style="left:689.0px;top:725.0px;width:80px">-34,5 %</div><div class="t r" style="left:584.3px;top:743.6px;width:80px">8755</div><div class="t r" style="left:627.2px;top:743.6px;width:80px">6 202</div><div class="t r" style="left:689.0px;top:743.6px;width:80px">-1,1 %</div><div class="t r" style="left:584.3px;top:776.6px;width:80px">107216</div><div class="t r" style="left:627.2px;top:776.6px;width:80px">217 893</div><div class="t r" style="left:689.0px;top:776.6px;width:80px">101,9 %</div><div class="t r" style="left:584.3px;top:795.0px;width:80px">14006</div><div class="t r" style="left:627.2px;top:795.0px;width:80px">25 624</div><div class="t r" style="left:689.0px;top:795.0px;width:80px">79,1 %</div><div class="t r" style="left:734.8px;top:650.0px;width:80px">11800</div><div class="t r" style="left:786.0px;top:650.0px;width:80px">10 254</div><div class="t r" style="left:734.8px;top:668.0px;width:80px">1266</div><div class="t r" style="left:786.0px;top:668.0px;width:80px">2 041</div><div class="t r" style="left:734.8px;top:687.0px;width:80px">16921</div><div class="t r" style="left:786.0px;top:687.0px;width:80px">13 133</div><div class="t r" style="left:734.8px;top:706.0px;width:80px">448222</div><div class="t r" style="left:786.0px;top:706.0px;width:80px">509 125</div><div class="t r" style="left:734.8px;top:725.0px;width:80px">59960</div><div class="t r" style="left:786.0px;top:725.0px;width:80px">73 146</div><div class="t r" style="left:734.8px;top:743.6px;width:80px">3357283</div><div class="t r" style="left:786.0px;top:743.6px;width:80px">3 935 717</div><div class="t r" style="left:734.8px;top:776.6px;width:80px">6695326</div><div class="t r" style="left:786.0px;top:776.6px;width:80px">7 522 097</div><div class="t r" style="left:734.8px;top:795.0px;width:80px">998718</div><div class="t r" style="left:786.0px;top:795.0px;width:80px">885 410</div><svg class="abs" style="left:0;top:0" width="1082" height="805"><path d="M268.4 648.0 V658.3 M263.4 653.5 L268.4 658.5 L273.4 653.5" stroke="#8a8a8a" stroke-width="2.3" fill="none"/><path d="M268.4 679.6 V668.9 M263.4 673.7 L268.4 668.7 L273.4 673.7" stroke="#8a8a8a" stroke-width="2.3" fill="none"/><path d="M268.4 685.5 V695.8 M263.4 691.0 L268.4 696.0 L273.4 691.0" stroke="#8a8a8a" stroke-width="2.3" fill="none"/><path d="M268.4 704.3 V714.6 M263.4 709.8 L268.4 714.8 L273.4 709.8" stroke="#8a8a8a" stroke-width="2.3" fill="none"/><path d="M268.4 723.3 V733.6 M263.4 728.8 L268.4 733.8 L273.4 728.8" stroke="#8a8a8a" stroke-width="2.3" fill="none"/><path d="M268.4 762.3 V751.6 M263.4 756.4 L268.4 751.4 L273.4 756.4" stroke="#8a8a8a" stroke-width="2.3" fill="none"/><path d="M268.4 775.2 V785.5 M263.4 780.7 L268.4 785.7 L273.4 780.7" stroke="#8a8a8a" stroke-width="2.3" fill="none"/><path d="M268.4 793.6 V803.9 M263.4 799.1 L268.4 804.1 L273.4 799.1" stroke="#8a8a8a" stroke-width="2.3" fill="none"/><path d="M424.5 661.0 V650.3 M419.5 655.1 L424.5 650.1 L429.5 655.1" stroke="#8a8a8a" stroke-width="2.3" fill="none"/><path d="M424.5 666.6 V676.9 M419.5 672.1 L424.5 677.1 L429.5 672.1" stroke="#8a8a8a" stroke-width="2.3" fill="none"/><path d="M424.5 685.5 V695.8 M419.5 691.0 L424.5 696.0 L429.5 691.0" stroke="#8a8a8a" stroke-width="2.3" fill="none"/><path d="M424.5 717.3 V706.6 M419.5 711.4 L424.5 706.4 L429.5 711.4" stroke="#8a8a8a" stroke-width="2.3" fill="none"/><path d="M424.5 736.3 V725.6 M419.5 730.4 L424.5 725.4 L429.5 730.4" stroke="#8a8a8a" stroke-width="2.3" fill="none"/><path d="M424.5 762.3 V751.6 M419.5 756.4 L424.5 751.4 L429.5 756.4" stroke="#8a8a8a" stroke-width="2.3" fill="none"/><path d="M424.5 788.2 V777.5 M419.5 782.3 L424.5 777.3 L429.5 782.3" stroke="#8a8a8a" stroke-width="2.3" fill="none"/><path d="M424.5 806.6 V795.9 M419.5 800.7 L424.5 795.7 L429.5 800.7" stroke="#8a8a8a" stroke-width="2.3" fill="none"/><path d="M568.0 661.0 V650.3 M563.0 655.1 L568.0 650.1 L573.0 655.1" stroke="#8a8a8a" stroke-width="2.3" fill="none"/><path d="M568.0 762.3 V751.6 M563.0 756.4 L568.0 751.4 L573.0 756.4" stroke="#8a8a8a" stroke-width="2.3" fill="none"/><path d="M568.0 788.2 V777.5 M563.0 782.3 L568.0 777.3 L573.0 782.3" stroke="#8a8a8a" stroke-width="2.3" fill="none"/><path d="M568.0 806.6 V795.9 M563.0 800.7 L568.0 795.7 L573.0 800.7" stroke="#8a8a8a" stroke-width="2.3" fill="none"/><path d="M723.0 648.0 V658.3 M718.0 653.5 L723.0 658.5 L728.0 653.5" stroke="#8a8a8a" stroke-width="2.3" fill="none"/><path d="M723.0 679.6 V668.9 M718.0 673.7 L723.0 668.7 L728.0 673.7" stroke="#8a8a8a" stroke-width="2.3" fill="none"/><path d="M723.0 685.5 V695.8 M718.0 691.0 L723.0 696.0 L728.0 691.0" stroke="#8a8a8a" stroke-width="2.3" fill="none"/><path d="M723.0 717.3 V706.6 M718.0 711.4 L723.0 706.4 L728.0 711.4" stroke="#8a8a8a" stroke-width="2.3" fill="none"/><path d="M723.0 723.3 V733.6 M718.0 728.8 L723.0 733.8 L728.0 728.8" stroke="#8a8a8a" stroke-width="2.3" fill="none"/><path d="M723.0 749.3 V759.6 M718.0 754.8 L723.0 759.8 L728.0 754.8" stroke="#8a8a8a" stroke-width="2.3" fill="none"/><path d="M723.0 788.2 V777.5 M718.0 782.3 L723.0 777.3 L728.0 782.3" stroke="#8a8a8a" stroke-width="2.3" fill="none"/><path d="M723.0 806.6 V795.9 M718.0 800.7 L723.0 795.7 L728.0 800.7" stroke="#8a8a8a" stroke-width="2.3" fill="none"/></svg><div class="ch" style="left:212.6px;top:618.5px;width:100px">Deutschland</div><div class="ch" style="left:369.0px;top:618.5px;width:100px">Belgien</div><div class="ch" style="left:524.0px;top:618.5px;width:100px">Frankreich</div><div class="ch" style="left:669.0px;top:618.5px;width:100px">Luxemburg</div></div>
<div class="abs" style="left:854px;top:615px;width:7px;height:173px;background:#a6a6a6;border-radius:3px"></div>
<div class="abs" style="left:9px;top:801px;width:640px;height:8px;background:#a6a6a6;border-radius:3px"></div>
<div class="abs" style="left:883px;top:607px;width:200px;height:200px;background:#b5e1c8"></div><div class="abs" style="left:888px;top:612px;width:188px;height:31px;background:#00a651;color:#1e3d2a;font-size:9px;text-align:center;line-height:33px;letter-spacing:-0.1px">GESAMT</div><div class="abs" style="left:888px;top:643px;width:188px;height:151px;background:#fff"></div><div class="t r" style="left:858.3px;top:647.3px;width:80px">26127</div><div class="t r" style="left:914.8px;top:647.3px;width:80px">23 696</div><div class="t r" style="left:990.8px;top:647.3px;width:80px">-8,8 %</div><div class="t r" style="left:858.3px;top:666.1px;width:80px">3613</div><div class="t r" style="left:914.8px;top:666.1px;width:80px">4 127</div><div class="t r" style="left:990.8px;top:666.1px;width:80px">16,6 %</div><div class="t r" style="left:858.3px;top:684.9px;width:80px">41050</div><div class="t r" style="left:914.8px;top:684.9px;width:80px">29 764</div><div class="t r" style="left:990.8px;top:684.9px;width:80px">-28,7 %</div><div class="t r" style="left:858.3px;top:703.7px;width:80px">983861</div><div class="t r" style="left:914.8px;top:703.7px;width:80px">976 806</div><div class="t r" style="left:990.8px;top:703.7px;width:80px">-0,5 %</div><div class="t r" style="left:858.3px;top:722.5px;width:80px">106975</div><div class="t r" style="left:914.8px;top:722.5px;width:80px">118 535</div><div class="t r" style="left:990.8px;top:722.5px;width:80px">23,1 %</div><div class="t r" style="left:858.3px;top:741.3px;width:80px">10202363</div><div class="t r" style="left:914.8px;top:741.3px;width:80px">11 254 461</div><div class="t r" style="left:990.8px;top:741.3px;width:80px">12,4 %</div><div class="t r" style="left:858.3px;top:760.1px;width:80px">10554364</div><div class="t r" style="left:914.8px;top:760.1px;width:80px">11 447 846</div><div class="t r" style="left:990.8px;top:760.1px;width:80px">13,6 %</div><div class="t r" style="left:858.3px;top:778.9px;width:80px">1407249</div><div class="t r" style="left:914.8px;top:778.9px;width:80px">1 346 805</div><div class="t r" style="left:990.8px;top:778.9px;width:80px">0,2 %</div><svg class="abs" style="left:0;top:0" width="1082" height="805"><path d="M1010.0 646.5 V656.8 M1005.0 652.0 L1010.0 657.0 L1015.0 652.0" stroke="#8a8a8a" stroke-width="2.3" fill="none"/><path d="M1010.0 678.3 V667.6 M1005.0 672.4 L1010.0 667.4 L1015.0 672.4" stroke="#8a8a8a" stroke-width="2.3" fill="none"/><path d="M1010.0 684.1 V694.4 M1005.0 689.6 L1010.0 694.6 L1015.0 689.6" stroke="#8a8a8a" stroke-width="2.3" fill="none"/><path d="M1010.0 702.9 V713.2 M1005.0 708.4 L1010.0 713.4 L1015.0 708.4" stroke="#8a8a8a" stroke-width="2.3" fill="none"/><path d="M1010.0 734.7 V724.0 M1005.0 728.8 L1010.0 723.8 L1015.0 728.8" stroke="#8a8a8a" stroke-width="2.3" fill="none"/><path d="M1010.0 753.5 V742.8 M1005.0 747.6 L1010.0 742.6 L1015.0 747.6" stroke="#8a8a8a" stroke-width="2.3" fill="none"/><path d="M1010.0 772.3 V761.6 M1005.0 766.4 L1010.0 761.4 L1015.0 766.4" stroke="#8a8a8a" stroke-width="2.3" fill="none"/><path d="M1010.0 791.1 V780.4 M1005.0 785.2 L1010.0 780.2 L1015.0 785.2" stroke="#8a8a8a" stroke-width="2.3" fill="none"/></svg>
</body></html>
